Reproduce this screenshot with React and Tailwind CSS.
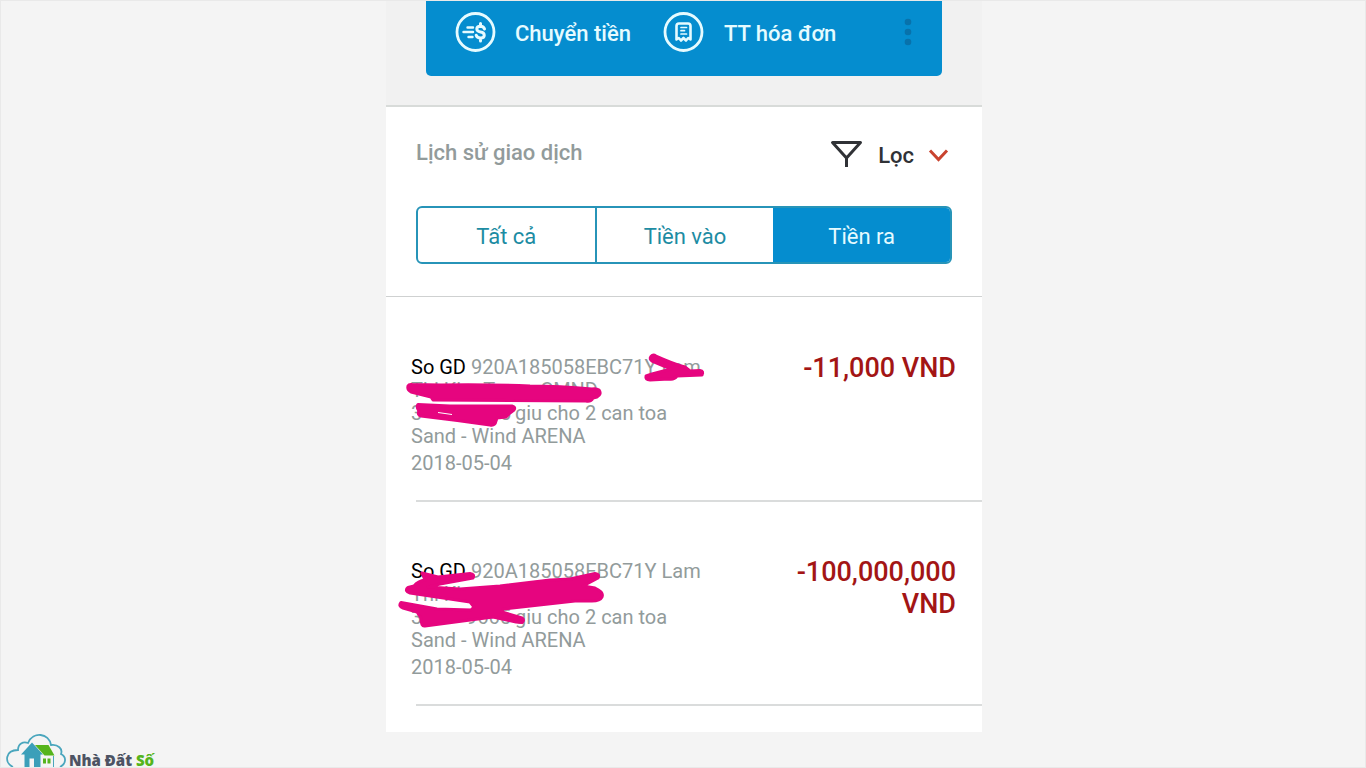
import React from "react";

const TABS = ["Tất cả", "Tiền vào", "Tiền ra"];

const TRANSACTIONS = [
  {
    id: "920A185058EBC71Y",
    name: "Lam",
    holder: "Thi Kim T",
    holderEnd: "CMND",
    note: "3",
    noteEnd: "5",
    place: "Sand - Wind ARENA",
    date: "2018-05-04",
    amount: "-11,000 VND",
    Marks: FirstMarks,
  },
  {
    id: "920A185058EBC71Y",
    name: "Lam",
    holder: "Thi Kim T",
    holderEnd: "",
    note: "3",
    noteEnd: "9665",
    place: "Sand - Wind ARENA",
    date: "2018-05-04",
    amount: "-100,000,000 VND",
    Marks: SecondMarks,
  },
];

function FirstMarks() {
  return (
    <svg aria-hidden="true" className="pointer-events-none absolute left-0 top-0" width="340" height="200" viewBox="386 298 340 200" fill="#e6057f" stroke="#e6057f" strokeWidth="3" strokeLinejoin="round">
      <path d="M408 386 Q407 390 411 392 L431 397 L433 400 L586 401 Q591 402 593 398 L597 397 Q602 394 599 390 Q596 388 592 389 Q560 386 530 386 Q480 384 441 385 L412 384.500 Q409 384 408 386Z" />
      <path d="M418 404.500 L450 406 L512 406 Q516 407 514 410 L510 413 L506 417 L497 418 L496 421 Q495 426 490 425 Q455 420 421 416 Q417 415 419 411 Q416 407 418 404.500Z" />
      <path d="M651 356.500 Q653 354 656 356 Q674 364 685 367 L690 371 L700 370.500 Q704 371 702 375 L677 376 Q674 380 669 379 L650 380 Q645 380 646 376 L652 374 L671 369 L652 361 Q649 359 651 356.500Z" />
      <path d="M438 412.500 L452 414.500" stroke="#fff" strokeWidth="1" />
    </svg>
  );
}

function SecondMarks() {
  return (
    <svg aria-hidden="true" className="pointer-events-none absolute left-0 top-0" width="340" height="204" viewBox="386 502 340 204" fill="#e6057f" stroke="#e6057f" strokeWidth="3" strokeLinejoin="round">
      <path d="M422 573 L438 577 L470 573.500 Q475 574 473 578 L440 584 L428 587 L460 589 L500 586 L550 580 L570 579 L595 573.500 Q600 574 598 578 L583 586 L595 588 Q604 592 602 597 Q600 601 592 601 L575 601 L503 609 L502 612 L522 618 Q525 620 522 622.500 L516 622 L493 617 L425 626 Q421 627 421 618 L417 612 L403 608 Q398 606 401 602.500 L437 609 L471 610 L474 607 L470 602 L410 593 Q404 591 408 587.500 L414 586 Q418 581 425 580Z" />
    </svg>
  );
}

function TransferIcon() {
  return (
    <svg aria-hidden="true" width="42" height="42" viewBox="0 0 42 42" fill="none" stroke="#e6fbff" strokeLinecap="round">
      <circle cx="21.500" cy="20" r="18.500" strokeWidth="2.800" />
      <path d="M13.500 15.500h5.500M9.500 20h9.500M14.500 25h4" strokeWidth="2.400" />
      <path d="M30.500 17c-.5-1.800-2-2.700-4-2.700-4.800 0-5 5 0 5.700s5 6 0 6c-2.200 0-3.700-.8-4.300-2.700M26.500 11.500v3M26.500 26v3" strokeWidth="3" />
    </svg>
  );
}

function BillIcon() {
  return (
    <svg aria-hidden="true" width="42" height="42" viewBox="0 0 42 42" fill="none" stroke="#e6fbff" strokeLinecap="round" strokeLinejoin="round">
      <circle cx="20.500" cy="20" r="18.500" strokeWidth="2.800" />
      <path d="M13.500 27.500V14q0-2.500 2.500-2.500h9q2.500 0 2.500 2.500v13.500l-2.300-1.500-2.200 2.500-2.500-2.500-2.500 2.500-2.200-2.500Z" strokeWidth="2.600" />
      <path d="M18 15.500h5.500M18 18.700h3.500M18 22h5.500" strokeWidth="1.700" />
    </svg>
  );
}

function Transaction({ item }) {
  const { Marks } = item;
  return (
    <li className="relative">
      <div className="flex justify-between pb-[25px] pl-[25px] pr-[26px] pt-[58px] text-[20px] leading-[23px] text-[#929b9b]">
        <div>
          <p><span className="text-black">So GD</span> {item.id} {item.name}</p>
          <p className="flex w-[187px] justify-between">
            <span>{item.holder}</span>
            <span>{item.holderEnd}</span>
          </p>
          <p className="flex gap-1">
            <span className="flex w-[100px] justify-between">
              <span>{item.note}</span>
              <span>{item.noteEnd}</span>
            </span>
            giu cho 2 can toa
          </p>
          <p>{item.place}</p>
          <p className="mt-1">{item.date}</p>
        </div>
        <p className="-mt-1 max-w-[170px] text-right text-[27px] font-medium leading-8 text-[#a31515]">{item.amount}</p>
      </div>
      <div className="ml-[30px] border-b-2 border-[#dadcdc]" />
      <Marks />
    </li>
  );
}

function Logo() {
  return (
    <a href="#" className="flex h-[35px] items-end gap-[3px] pl-px font-['Open_Sans',sans-serif] text-[15px] font-extrabold leading-[14px] text-[#4d5363]">
      <svg aria-hidden="true" width="62" height="35" viewBox="0 0 62 35" fill="none">
        <path d="M9 35C0 31 1 18 14 18C14 12 19 9 24 11C29-1 45 1 47 13C54 12 59 17 57 22C63 25 62 32 56 35" stroke="#4aa6bd" strokeWidth="1.800" />
        <path d="M17 22.500L28 10.500L39 22.500H36.500V35H30V26.500H25.500V35H20.500V22.500Z" fill="#3b9fb9" />
        <path d="M31 13H44.500L50.500 23.500H40.500Z" fill="#55b41c" />
        <path d="M39 26.500h3v5h-3zM43.500 26.500h3v5h-3z" fill="#55b41c" />
        <path d="M49.500 24V35" stroke="#4aa6bd" strokeWidth="1" />
      </svg>
      <span>Nhà Đất <span className="text-[#55b41c]">Số</span></span>
    </a>
  );
}

export default function App() {
  return (
    <div className="flex min-h-screen flex-col border border-[#e9e9e9] bg-[#f4f4f4] pl-[2px] font-[Roboto,sans-serif]">
      <main className="mx-auto w-full max-w-[596px] bg-white">
        <header className="border-b-2 border-[#d8dbd9] bg-[#f1f1f1] px-10 pb-[29px]">
          <nav className="flex h-[75px] items-start rounded-b-[5px] bg-[#058dcf] pl-7 pr-6 pt-[11px] text-[22px] font-medium text-[#e6fbff]">
            <a href="#" className="flex items-center gap-[19px]"><TransferIcon />Chuyển tiền</a>
            <a href="#" className="ml-8 flex items-center gap-[19px]"><BillIcon />TT hóa đơn</a>
            <button aria-label="Thêm" className="ml-auto flex h-10 w-5 items-center justify-center">
              <svg aria-hidden="true" width="8" height="28" viewBox="0 0 8 28" fill="#0872ab">
                <circle cx="4" cy="4" r="3.300" /><circle cx="4" cy="14" r="3.300" /><circle cx="4" cy="24" r="3.300" />
              </svg>
            </button>
          </nav>
        </header>

        <section className="border-b border-[#cfd1d1] px-[30px] pb-8 pt-8">
          <div className="flex items-start justify-between">
            <h1 className="text-[22px] font-medium leading-7 text-[#929b9b]">Lịch sử giao dịch</h1>
            <button className="flex items-center text-[22px] font-medium leading-[34px] text-[#303236]">
              <svg aria-hidden="true" className="mb-1 mr-[14px]" width="34" height="28" viewBox="0 0 34 28" fill="none" stroke="#303236" strokeWidth="3" strokeLinejoin="round">
                <path d="M2.500 2.500H30.500L16.500 18Z M16.500 17V27" />
              </svg>
              Lọc
              <svg aria-hidden="true" className="ml-[14px] mr-[3px]" width="21" height="14" viewBox="0 0 21 14" fill="none" stroke="#c9432f" strokeWidth="3">
                <path d="M2 1.500L10.500 10.500L19 1.500" />
              </svg>
            </button>
          </div>
          <div className="mt-[33px] flex overflow-hidden rounded-md border-2 border-[#2794b8] text-[22px] text-[#1d8ca3]">
            {TABS.map((tab, i) => (
              <button
                key={tab}
                aria-pressed={i === 2}
                className={
                  i === 2
                    ? "flex-1 bg-[#058dcf] pb-[9px] pt-[13px] leading-8 text-[#e6fbff]"
                    : i === 0
                      ? "flex-1 border-r-2 border-[#2794b8] pb-[9px] pt-[13px] leading-8"
                      : "flex-1 pb-[9px] pt-[13px] leading-8"
                }
              >
                {tab}
              </button>
            ))}
          </div>
        </section>

        <ul className="pb-[26px] pt-px">
          {TRANSACTIONS.map((item) => (
            <Transaction key={item.amount} item={item} />
          ))}
        </ul>
      </main>
      <Logo />
    </div>
  );
}
